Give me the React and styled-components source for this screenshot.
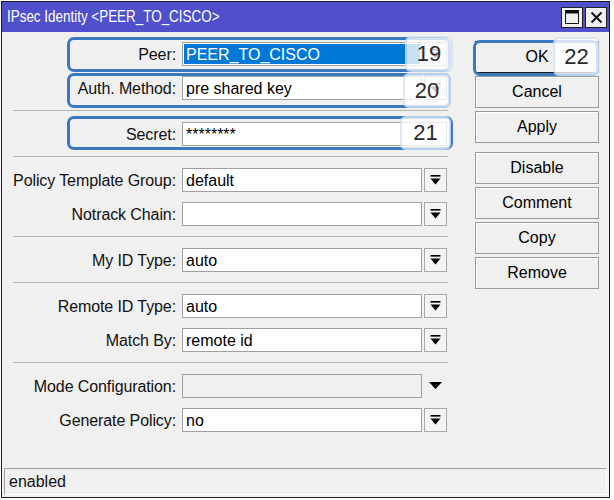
import React from "react";
import styled, { createGlobalStyle } from "styled-components";

const GlobalStyle = createGlobalStyle`
  html, body { margin: 0; padding: 0; background: #ffffff; }
  body { font-family: "Liberation Sans", Arial, sans-serif; }
`;

const Window = styled.div`
  position: relative;
  box-sizing: border-box;
  margin: 1px 0 0 1px;
  width: 609px;
  height: 497px;
  border: 1px solid #1c1c1c;
  background: #f0f0f0;
  display: flex;
  flex-direction: column;
`;

const TitleBar = styled.div`
  height: 30px;
  background: #5050cd;
  display: flex;
  align-items: center;
  justify-content: space-between;
  padding: 0 2px 0 5px;
`;

const Title = styled.span`
  display: inline-block;
  color: #ffffff;
  font-size: 17px;
  white-space: nowrap;
  transform: scaleX(0.79);
  transform-origin: left center;
`;

const TitleButtons = styled.div`
  display: flex;
  gap: 2px;
`;

const TitleButton = styled.div`
  box-sizing: border-box;
  width: 22px;
  height: 21px;
  background: #f0f0f0;
  border: 1px solid #222;
  display: flex;
  align-items: center;
  justify-content: center;
`;

const Body = styled.div`
  flex: 1;
  display: flex;
  padding-top: 10px;
`;

const Form = styled.div`
  width: 446px;
  display: flex;
  flex-direction: column;
`;

const Section = styled.div`
  display: flex;
  flex-direction: column;
  gap: 10px;
`;

const Separator = styled.div`
  height: 1px;
  margin: 10px 0 11px 11px;
  background: #b4b4b4;
`;

const Row = styled.div`
  display: flex;
  align-items: center;
  height: 24px;
`;

const Label = styled.div`
  width: 174px;
  margin-right: 6px;
  padding-top: 2px;
  text-align: right;
  font-size: 16px;
  letter-spacing: -0.1px;
  color: #111;
  white-space: nowrap;
`;

const Field = styled.div`
  box-sizing: border-box;
  width: ${(p) => (p.$wide ? "265px" : "240px")};
  height: 24px;
  border: 1px solid #a0a0a0;
  background: ${(p) => (p.$disabled ? "#f0f0f0" : "#ffffff")};
  padding: 1px;
  display: flex;
  font-size: 16px;
  color: #000;
`;

const FieldText = styled.div`
  flex: 1;
  display: flex;
  align-items: center;
  padding: 2px 0 0 2px;
  background: ${(p) => (p.$selected ? "#0078d7" : "transparent")};
  color: ${(p) => (p.$selected ? "#ffffff" : "#000")};
`;

const DropButton = styled.div`
  box-sizing: border-box;
  width: 23px;
  height: 24px;
  margin-left: 2px;
  border: 1px solid #a8a8a8;
  background: #f4f4f4;
  display: flex;
  align-items: center;
  justify-content: center;
`;

const PlainArrow = styled.div`
  width: 23px;
  margin-left: 2px;
  display: flex;
  align-items: center;
  justify-content: center;
`;

const ButtonColumn = styled.div`
  margin-left: 27px;
  margin-top: -1px;
  display: flex;
  flex-direction: column;
  gap: 3px;
`;

const ActionButton = styled.div`
  box-sizing: border-box;
  width: 124px;
  height: 32px;
  margin-top: ${(p) => (p.$spaced ? "6px" : "0")};
  border: 1px solid ${(p) => (p.$default ? "#1a1a1a" : "#9a9a9a")};
  background: #f0f0f0;
  box-shadow: inset 1px 1px 0 #ffffff;
  display: flex;
  align-items: center;
  justify-content: center;
  font-size: 16px;
  color: #000;
`;

const StatusBar = styled.div`
  box-sizing: border-box;
  height: 27px;
  margin: 0 2px 2px 2px;
  border: 1px solid #a0a0a0;
  border-right-color: #ffffff;
  border-bottom-color: #ffffff;
  display: flex;
  align-items: center;
  padding-left: 4px;
  font-size: 16px;
  color: #111;
`;

const Highlight = styled.div`
  position: absolute;
  box-sizing: border-box;
  left: ${(p) => p.$x}px;
  top: ${(p) => p.$y}px;
  width: ${(p) => p.$w}px;
  height: ${(p) => p.$h}px;
  border: 3px solid #3b78c2;
  border-radius: 7px;
  pointer-events: none;
`;

const Badge = styled.div`
  position: absolute;
  box-sizing: border-box;
  left: ${(p) => p.$x}px;
  top: ${(p) => p.$y}px;
  width: ${(p) => p.$w}px;
  height: ${(p) => p.$h}px;
  border: 2px solid rgba(59, 120, 194, 0.18);
  border-radius: 6px;
  background: rgba(255, 255, 255, 0.78);
  display: flex;
  align-items: center;
  justify-content: center;
  font-size: 22px;
  color: #2a2a2a;
`;

const DropIcon = () => (
  <svg width="11" height="11" viewBox="0 0 11 11">
    <rect x="0.5" y="0" width="10" height="1.6" fill="#000" />
    <polygon points="0.5,3.5 10.5,3.5 5.5,9.5" fill="#000" />
  </svg>
);

const ArrowIcon = () => (
  <svg width="13" height="8" viewBox="0 0 13 8">
    <polygon points="0,0 13,0 6.5,7" fill="#000" />
  </svg>
);

const MaxIcon = () => (
  <svg width="14" height="14" viewBox="0 0 14 14">
    <rect x="0.5" y="0.5" width="13" height="13" fill="none" stroke="#111" />
    <rect x="0.5" y="0.5" width="13" height="3" fill="#111" />
  </svg>
);

const CloseIcon = () => (
  <svg width="13" height="13" viewBox="0 0 13 13">
    <path d="M1.5 1.5 L11.5 11.5 M11.5 1.5 L1.5 11.5" stroke="#111" strokeWidth="2" />
  </svg>
);

const SelectRow = ({ label, value, selected }) => (
  <Row>
    <Label>{label}</Label>
    <Field>
      <FieldText $selected={selected}>{value}</FieldText>
    </Field>
    <DropButton>
      <DropIcon />
    </DropButton>
  </Row>
);

export default function App() {
  return (
    <>
      <GlobalStyle />
      <Window>
        <TitleBar>
          <Title>IPsec Identity &lt;PEER_TO_CISCO&gt;</Title>
          <TitleButtons>
            <TitleButton>
              <MaxIcon />
            </TitleButton>
            <TitleButton>
              <CloseIcon />
            </TitleButton>
          </TitleButtons>
        </TitleBar>
        <Body>
          <Form>
            <Section>
              <SelectRow label="Peer:" value="PEER_TO_CISCO" selected />
              <SelectRow label="Auth. Method:" value="pre shared key" />
            </Section>
            <Separator />
            <Section>
              <Row>
                <Label>Secret:</Label>
                <Field $wide>
                  <FieldText>********</FieldText>
                </Field>
              </Row>
            </Section>
            <Separator />
            <Section>
              <SelectRow label="Policy Template Group:" value="default" />
              <SelectRow label="Notrack Chain:" value="" />
            </Section>
            <Separator />
            <Section>
              <SelectRow label="My ID Type:" value="auto" />
            </Section>
            <Separator />
            <Section>
              <SelectRow label="Remote ID Type:" value="auto" />
              <SelectRow label="Match By:" value="remote id" />
            </Section>
            <Separator />
            <Section>
              <Row>
                <Label>Mode Configuration:</Label>
                <Field $disabled>
                  <FieldText />
                </Field>
                <PlainArrow>
                  <ArrowIcon />
                </PlainArrow>
              </Row>
              <SelectRow label="Generate Policy:" value="no" />
            </Section>
          </Form>
          <ButtonColumn>
            <ActionButton $default>OK</ActionButton>
            <ActionButton>Cancel</ActionButton>
            <ActionButton>Apply</ActionButton>
            <ActionButton $spaced>Disable</ActionButton>
            <ActionButton>Comment</ActionButton>
            <ActionButton>Copy</ActionButton>
            <ActionButton>Remove</ActionButton>
          </ButtonColumn>
        </Body>
        <StatusBar>enabled</StatusBar>

        <Highlight $x={65} $y={35} $w={384} $h={35} />
        <Badge $x={403} $y={34} $w={48} $h={36}>19</Badge>
        <Highlight $x={65} $y={71} $w={384} $h={35} />
        <Badge $x={401} $y={71} $w={48} $h={35}>20</Badge>
        <Highlight $x={65} $y={114} $w={386} $h={34} />
        <Badge $x={398} $y={114} $w={51} $h={34}>21</Badge>
        <Highlight $x={471} $y={38} $w={126} $h={36} />
        <Badge $x={551} $y={35} $w={47} $h={39}>22</Badge>
      </Window>
    </>
  );
}
